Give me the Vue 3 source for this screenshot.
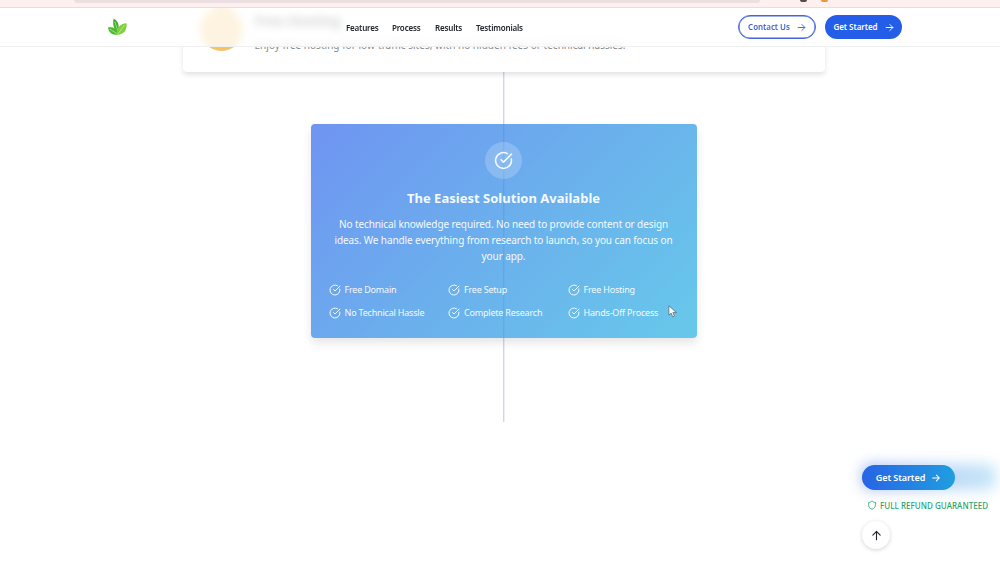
<template>
  <div class="page">
    <header class="top">
      <div class="browser-strip">
        <div class="address-bar"></div>
        <i class="ext dark"></i>
        <i class="ext orange"></i>
      </div>
      <div class="navbar">
        <svg class="logo" viewBox="0 0 22 20">
          <path d="M7 1C11.500 3.500 13.500 8 11.500 15C7 12 5.500 7 7 1Z" fill="#3fb02c" />
          <path d="M1 10.500C7 9.500 11 12 12 17.500C6 19.500 2 16 1 10.500Z" fill="#4dba30" />
          <path d="M20.500 6C21 13 18 18 10.500 18C10 11 13.500 6.500 20.500 6Z" fill="#7ed038" />
          <path d="M8.300 5L11 13M18 8.500L12 16.500M3.500 12.500L10.500 17" fill="none" stroke="#d3f3a3" stroke-width=".7" />
        </svg>
        <nav class="links">
          <a v-for="link in links" :key="link.label" :style="{ width: link.width + 'px' }">
            <span>{{ link.label }}</span>
          </a>
        </nav>
        <div class="actions">
          <button class="btn outline">
            <span>Contact Us</span>
            <svg viewBox="0 0 24 24"><path d="M3 12h18M13 4l8 8-8 8" /></svg>
          </button>
          <button class="btn solid">
            <span>Get Started</span>
            <svg viewBox="0 0 24 24"><path d="M3 12h18M13 4l8 8-8 8" /></svg>
          </button>
        </div>
      </div>
    </header>

    <main class="timeline">
      <div class="line"></div>
      <section class="hosting">
        <div class="hosting-icon"></div>
        <div class="hosting-copy">
          <h3>Free Hosting</h3>
          <p>Enjoy free hosting for low-traffic sites, with no hidden fees or technical hassles.</p>
        </div>
      </section>

      <section class="solution">
        <div class="badge">
          <svg class="check" viewBox="0 0 24 24">
            <path d="M21.8 10A10 10 0 1 1 17 3.34" />
            <path d="M9 11l3 3L22 4" />
          </svg>
        </div>
        <h2>The Easiest Solution Available</h2>
        <p class="lead">
          <span>No technical knowledge required. No need to provide content or design</span>
          <span>ideas. We handle everything from research to launch, so you can focus on</span>
          <span>your app.</span>
        </p>
        <ul class="perks">
          <li v-for="perk in perks" :key="perk">
            <svg class="check" viewBox="0 0 24 24">
              <path d="M21.8 10A10 10 0 1 1 17 3.34" />
              <path d="M9 11l3 3L22 4" />
            </svg>
            <span>{{ perk }}</span>
          </li>
        </ul>
      </section>
    </main>

    <aside class="floating">
      <div class="cta-wrap">
        <div class="glow"></div>
        <button class="cta">
          <span>Get Started</span>
          <svg viewBox="0 0 24 24"><path d="M4 12h16M13 5l7 7-7 7" /></svg>
        </button>
      </div>
      <div class="refund">
        <svg viewBox="0 0 24 24">
          <path d="M20 13c0 5-3.5 7.5-8 9-4.500-1.500-8-4-8-9V6c3 0 5.500-1.500 8-4 2.500 2.500 5 4 8 4z" />
        </svg>
        <span>FULL REFUND GUARANTEED</span>
      </div>
      <button class="to-top" aria-label="Back to top">
        <svg viewBox="0 0 24 24"><path d="M12 21V3M4 11l8-8 8 8" /></svg>
      </button>
    </aside>

    <svg class="cursor" viewBox="0 0 10 14">
      <path d="M1 1v10l2.500-2.200L5.300 13l1.900-.8-1.800-4H9z" fill="#fff" stroke="#59636d" stroke-width=".8" />
    </svg>
  </div>
</template>

<script setup>
const links = [
  { label: 'Features', width: 32 },
  { label: 'Process', width: 29 },
  { label: 'Results', width: 27 },
  { label: 'Testimonials', width: 47 },
];

const perks = [
  'Free Domain',
  'Free Setup',
  'Free Hosting',
  'No Technical Hassle',
  'Complete Research',
  'Hands-Off Process',
];
</script>

<style>
body { background: #fff; overflow: hidden; }
</style>

<style scoped>
* { box-sizing: border-box; }
.page { position: relative; width: 1000px; height: 563px; overflow: hidden; background: #fff; font-family: "Noto Sans", "Open Sans", sans-serif; color: #20242b; }
h2, h3, p, ul { margin: 0; padding: 0; }
button { font-family: inherit; padding: 0; border: 0; }
span { white-space: nowrap; }
svg { fill: none; stroke: currentColor; stroke-width: 2; stroke-linecap: round; stroke-linejoin: round; flex-shrink: 0; }

/* fixed header over the scrolled timeline */
.top { position: absolute; z-index: 5; top: 0; left: 0; width: 1000px; height: 47px; }
.browser-strip { display: flex; height: 8px; padding-left: 74px; background: #fff0f0; border-bottom: 1px solid #e9dcdd; }
.address-bar { width: 686px; height: 3px; background: #ecdfe1; border-radius: 0 0 5px 5px; margin-right: 40px; }
.ext { width: 7px; height: 2px; border-radius: 0 0 3px 3px; margin-right: 14px; }
.dark { background: #59484c; }
.orange { background: #e8953c; }
.navbar { display: flex; align-items: center; height: 39px; padding: 0 98px 0 107px; background: rgba(255, 255, 255, 0.8); backdrop-filter: blur(4px); border-bottom: 1px solid #eeeff1; }
.logo { width: 21px; height: 20px; stroke: none; }
.links { display: flex; gap: 14px; margin-left: 218px; font-size: 8px; font-weight: 600; line-height: 12px; padding-top: 1px; }
.links span { letter-spacing: -0.18px; }
.actions { display: flex; gap: 9px; margin-left: auto; }
.btn { display: flex; align-items: center; justify-content: center; gap: 7px; height: 24px; border-radius: 12px; font-size: 8px; font-weight: 600; letter-spacing: -0.05px; }
.btn span { padding-bottom: 1px; }
.btn svg { width: 9px; height: 9px; stroke-width: 2.500; }
.outline { width: 78px; color: #4264d5; background: #fff; border: 1.5px solid #4264dc; box-shadow: inset 0 0 0 0.5px #4264dc; }
.solid { width: 77px; color: #fff; background: #245de7; }

.timeline { position: relative; display: flex; flex-direction: column; align-items: center; padding-left: 7px; }
.line { position: absolute; top: 0; left: 503px; width: 2px; height: 422px; background: linear-gradient(90deg, #d2d3f0 50%, #eeeefa 50%); }
.hosting { position: relative; display: flex; width: 642px; height: 72px; padding: 8px 17px 0; background: #fff; border-radius: 0 0 4px 4px; box-shadow: 0 3px 5px rgba(0, 0, 0, 0.11); }
.hosting-icon { width: 43px; height: 43px; border-radius: 50%; background: #f5c265; margin-right: 12px; }
.hosting-copy h3 { font-size: 14px; line-height: 20px; padding-top: 3px; letter-spacing: -0.2px; }
.hosting-copy p { padding-top: 6px; font-size: 10px; line-height: 16px; letter-spacing: 0.02px; color: #858a90; white-space: nowrap; }

.solution { position: relative; display: flex; flex-direction: column; align-items: center; width: 386px; height: 214px; margin-top: 52px; padding-top: 18px; border-radius: 4px; color: #f4faff; background: linear-gradient(135deg, rgba(37, 93, 235, 0.66), rgba(55, 148, 230, 0.74) 50%, rgba(55, 183, 228, 0.76)); box-shadow: 0 5px 10px rgba(0, 0, 0, 0.1); }
.badge { display: flex; align-items: center; justify-content: center; width: 37px; height: 37px; border-radius: 50%; background: rgba(255, 255, 255, 0.2); }
.badge .check { width: 19px; height: 19px; }
h2 { margin-top: 9px; font-size: 13px; line-height: 20px; font-weight: 700; letter-spacing: 0.02px; }
.lead { display: flex; flex-direction: column; align-items: center; margin-top: 8px; font-size: 10px; line-height: 16.200px; letter-spacing: -0.1px; }
.perks { display: grid; grid-template-columns: repeat(3, 119.500px); row-gap: 7px; width: 350px; margin-top: 17px; list-style: none; }
.perks li { display: flex; align-items: center; gap: 4px; height: 16px; font-size: 9px; letter-spacing: -0.2px; }
.perks .check { width: 12px; height: 12px; }

.floating { position: absolute; left: 862px; top: 465px; display: flex; flex-direction: column; align-items: flex-start; }
.cta-wrap { position: relative; }
.glow { position: absolute; left: 0; top: -1px; width: 134px; height: 26px; border-radius: 8px; background: linear-gradient(90deg, #8da8ef, #b4dff6); filter: blur(7px); opacity: 0.75; }
.cta { position: relative; display: flex; align-items: center; justify-content: center; gap: 6px; width: 93px; height: 25px; border-radius: 13px; color: #fff; background: linear-gradient(90deg, #2864e5, #209edf); font-size: 9px; font-weight: 600; letter-spacing: -0.05px; }
.cta svg { width: 10px; height: 10px; stroke-width: 2.500; }
.refund { display: flex; align-items: center; gap: 3px; height: 16px; margin: 7px 0 0 5px; color: #29a36a; font-size: 8px; font-weight: 500; letter-spacing: 0.04px; }
.refund svg { width: 10px; height: 10px; }
.to-top { display: flex; align-items: center; justify-content: center; width: 28px; height: 28px; margin-top: 8px; border-radius: 50%; background: #fff; color: #20242b; box-shadow: 0 1px 4px rgba(0, 0, 0, 0.17); }
.to-top svg { width: 11px; height: 11px; stroke-width: 2.500; }
.cursor { position: absolute; z-index: 6; left: 668px; top: 305px; width: 9px; height: 13px; }
</style>
